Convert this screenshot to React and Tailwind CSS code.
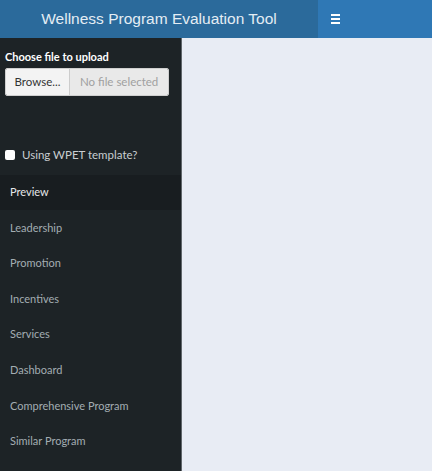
import React from "react";

const items = ["Leadership", "Promotion", "Incentives", "Services", "Dashboard", "Comprehensive Program", "Similar Program"];

export default function App() {
  return (
    <div className="w-[432px] h-[471px] flex flex-col overflow-hidden bg-[#e8ecf4]">
      <header className="h-[38px] flex shrink-0">
        <div className="w-[318px] bg-[#2b6a9b] flex items-center justify-center text-[15.5px] text-[#e4edf4] [font-family:'Liberation_Sans',sans-serif] pb-[1px]">
          Wellness Program Evaluation Tool
        </div>
        <div className="flex-1 bg-[#2f78b5] flex items-center pl-[13px]">
          <div className="flex flex-col gap-[2px] w-[9px]">
            <div className="h-[2px] bg-white" />
            <div className="h-[2px] bg-white" />
            <div className="h-[2px] bg-white" />
          </div>
        </div>
      </header>
      <div className="flex flex-1">
        <aside className="w-[182px] bg-[#1d2326] border-r border-[#60666a] flex flex-col [font-family:Lato,sans-serif] text-[11px]">
          <div className="pt-[12px] px-[5px]">
            <div className="font-bold text-white text-[11px] leading-[14px]">Choose file to upload</div>
            <div className="mt-[4px] flex h-[28px] w-[164px] rounded-[2px] overflow-hidden border border-[#cfcfcf] text-[11.5px]">
              <div className="w-[64px] bg-[#f3f3f3] text-[#333] flex items-center justify-center border-r border-[#cccccc]">Browse...</div>
              <div className="flex-1 bg-[#e9e9e9] text-[#a0a0a0] flex items-center pl-[10px]">No file selected</div>
            </div>
          </div>
          <div className="mt-[49px] flex items-center px-[5px] h-[20px]">
            <div className="w-[10px] h-[10px] bg-white rounded-[2px]" />
            <span className="ml-[7px] text-[#c9ced1] text-[11.5px]">Using WPET template?</span>
          </div>
          <div className="mt-[10px] h-[35px] bg-[#181d20] flex items-center pl-[10px] text-[#e6e8ea]">Preview</div>
          {items.map((t) => (
            <div key={t} className="h-[35.6px] flex items-center pl-[10px] text-[#a3adb2]">{t}</div>
          ))}
        </aside>
        <main className="flex-1" />
      </div>
    </div>
  );
}
